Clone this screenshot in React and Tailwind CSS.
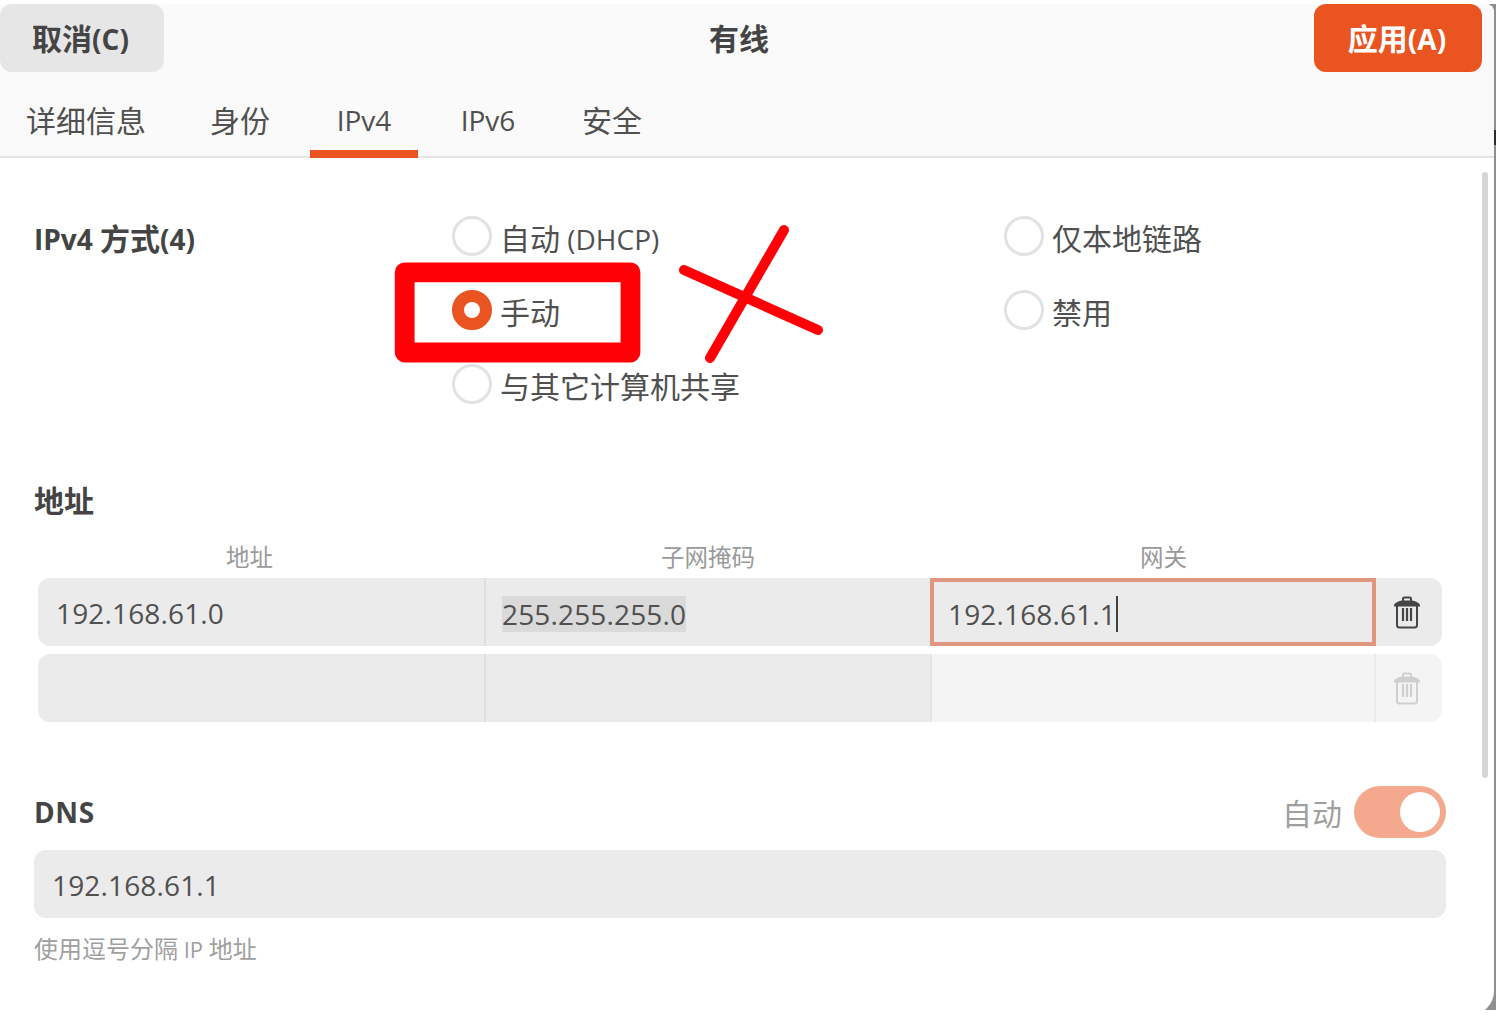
import { useState } from "react";

const tabs = [
  { id: "details", label: "详细信息", width: "w-[172px]" },
  { id: "identity", label: "身份", width: "w-[136px]" },
  { id: "ipv4", label: "IPv4", latin: true, width: "w-[108px]" },
  { id: "ipv6", label: "IPv6", latin: true, width: "w-[140px]" },
  { id: "security", label: "安全", width: "w-[108px]" },
];

// Latin text runs slightly smaller than the Chinese text around it
const Latin = ({ children }) => <span className="text-[28px]">{children}</span>;

const TrashIcon = ({ className }) => (
  <svg width="28" height="34" viewBox="0 0 28 34" fill="none" className={className}>
    <path d="M1 11.500V10c1.500-2.500 4.500-4 8-4.500h10c3.500 .5 6.500 2 8 4.500v1.500z" fill="currentColor" />
    <path d="M10 6V3.600q0-1.200 1.200-1.200h5.600q1.200 0 1.200 1.200V6" stroke="currentColor" strokeWidth="2" />
    <path d="M4 11v19q0 2.500 2.500 2.500h15q2.500 0 2.500-2.500V11" stroke="currentColor" strokeWidth="2" />
    <path d="M10 13v13M14 13v13M18 13v13" stroke="currentColor" strokeWidth="2.200" />
  </svg>
);

const Radio = ({ checked, onSelect, children }) => (
  <button onClick={onSelect} className="flex h-[74px] items-center gap-[8px] text-left">
    <span
      className={`size-10 shrink-0 rounded-full bg-white ${
        checked ? "border-[12px] border-[#e95420]" : "border-[3px] border-[#e2e2e2]"
      }`}
    />
    <span className="pt-[6px] whitespace-pre">{children}</span>
  </button>
);

const App = () => {
  const [tab, setTab] = useState("ipv4");
  const [method, setMethod] = useState("manual");

  return (
    <div className="h-[1020px] w-[1496px] bg-white pt-1 font-['Open_Sans','Noto_Sans_CJK_SC',sans-serif] text-[30px] leading-[40px] text-[#505050]">
      <div className="relative h-[1006px] overflow-hidden bg-[#8f8f8f]">
        <div className="h-[1011px] w-[1494px] rounded-tr-[8px] rounded-br-[24px] bg-white">

          {/* Header */}
          <div className="h-[154px] rounded-tr-[8px] border-b-2 border-[#e4e4e4] bg-[#fafafa]">
            <div className="flex h-[68px] items-center justify-between pr-3 font-bold text-[#444444]">
              <button className="h-[68px] w-[164px] rounded-xl bg-[#e6e6e6] pt-px pr-[3px]">
                取消<Latin>(C)</Latin>
              </button>
              <h1 className="pt-[2px]">有线</h1>
              <button className="h-[68px] w-[168px] rounded-xl bg-[#e95420] pt-px pr-[2px] text-white">
                应用<Latin>(A)</Latin>
              </button>
            </div>

            {/* Tabs */}
            <div className="flex h-[86px]">
              {tabs.map((t) => (
                <button
                  key={t.id}
                  onClick={() => setTab(t.id)}
                  className={`${t.width} h-[86px] border-b-8 ${
                    tab === t.id ? "border-[#e95420]" : "border-transparent"
                  } ${t.id === "identity" ? "mr-[2px]" : ""} ${t.latin ? "pt-[17px]" : "pt-[20px]"}`}
                >
                  {t.latin ? <Latin>{t.label}</Latin> : t.label}
                </button>
              ))}
            </div>
          </div>

          {/* Method */}
          <div className="flex h-[305px] pt-[41px] pl-[34px]">
            <h2 className="w-[418px] pt-[20px] font-bold text-[#444444]">
              <Latin>IPv4 </Latin>方式<Latin>(4)</Latin>
            </h2>
            <div className="flex w-[552px] flex-col">
              <Radio checked={method === "auto"} onSelect={() => setMethod("auto")}>
                自动<Latin> (DHCP)</Latin>
              </Radio>
              <Radio checked={method === "manual"} onSelect={() => setMethod("manual")}>手动</Radio>
              <Radio checked={method === "shared"} onSelect={() => setMethod("shared")}>与其它计算机共享</Radio>
            </div>
            <div className="flex flex-col">
              <Radio checked={method === "link"} onSelect={() => setMethod("link")}>仅本地链路</Radio>
              <Radio checked={method === "off"} onSelect={() => setMethod("off")}>禁用</Radio>
            </div>
          </div>

          {/* Addresses */}
          <div className="h-[312px] pt-[18px] pl-[34px]">
            <h2 className="font-bold text-[#444444]">地址</h2>
            <div className="flex h-[57px] pt-[16px] pl-1 text-center text-[23.5px] text-[#9a9a9a]">
              <span className="w-[423px]">地址</span>
              <span className="w-[494px]">子网掩码</span>
              <span className="w-[417px]">网关</span>
            </div>
            <div className="ml-1 flex h-[68px] w-[1404px] overflow-hidden rounded-xl bg-[#ebebeb] text-[28px] tracking-[0.15px]">
              <div className="flex w-[448px] items-center border-r-2 border-[#dedede] pt-[2px] pl-[18px]">192.168.61.0</div>
              <div className="flex w-[444px] items-center pt-1 pl-4">
                <span className="h-9 bg-[#dadada] leading-[36px]">255.255.255.0</span>
              </div>
              <div className="flex w-[446px] items-center border-4 border-[#e0967c] pt-1 pl-[14px]">
                <span className="h-9 border-r-2 border-[#404040] leading-[36px]">192.168.61.1</span>
              </div>
              <button className="flex flex-1 items-center justify-center pr-1">
                <TrashIcon className="text-[#454545]" />
              </button>
            </div>
            <div className="mt-2 ml-1 flex h-[68px] w-[1404px] overflow-hidden rounded-xl bg-[#f4f4f4]">
              <div className="w-[448px] border-r-2 border-[#dedede] bg-[#ebebeb]" />
              <div className="w-[446px] border-r-2 border-[#e5e5e5] bg-[#ebebeb]" />
              <div className="w-[444px] border-r-2 border-[#ebebeb]" />
              <button disabled className="flex flex-1 items-center justify-center pr-1">
                <TrashIcon className="text-[#cfcfcf]" />
              </button>
            </div>
          </div>

          {/* DNS */}
          <div className="w-[1446px] pt-[11px] pl-[34px]">
            <div className="flex h-[52px] items-center justify-between">
              <h2 className="text-[28px] font-bold tracking-[0.6px] text-[#444444]">DNS</h2>
              <div className="flex items-center gap-3 text-[#9f9f9f]">
                <span className="pt-[3px]">自动</span>
                <span className="flex h-[52px] w-[92px] items-center justify-end rounded-full bg-[#f4a98f] pr-[6px]">
                  <span className="size-10 rounded-full bg-white" />
                </span>
              </div>
            </div>
            <div className="mt-3 flex h-[68px] items-center rounded-xl bg-[#ebebeb] pt-[2px] pl-[18px] text-[28px] tracking-[0.15px]">
              192.168.61.1
            </div>
            <p className="pt-[11px] text-[24px] text-[#9f9f9f]">
              使用逗号分隔<span className="text-[22px]"> IP </span>地址
            </p>
          </div>
        </div>

        {/* Scrollbar */}
        <div className="absolute top-[168px] left-[1482px] h-[606px] w-[6px] rounded-full bg-[#d6d6d6]" />
        <div className="absolute top-[126px] left-[1494px] h-[15px] w-[2px] bg-[#2c2c2c]" />

        {/* Red marks over the manual option */}
        <svg className="pointer-events-none absolute top-[-4px] left-0" width="900" height="400" fill="none" stroke="#ff0006">
          <path d="M404.700 272.300H630.500V352.500H404.700Z" strokeWidth="19.800" strokeLinejoin="round" />
          <path d="M684 270L818 330M784 230L710 358" strokeWidth="10" strokeLinecap="round" />
        </svg>
      </div>
    </div>
  );
};

export default App;
